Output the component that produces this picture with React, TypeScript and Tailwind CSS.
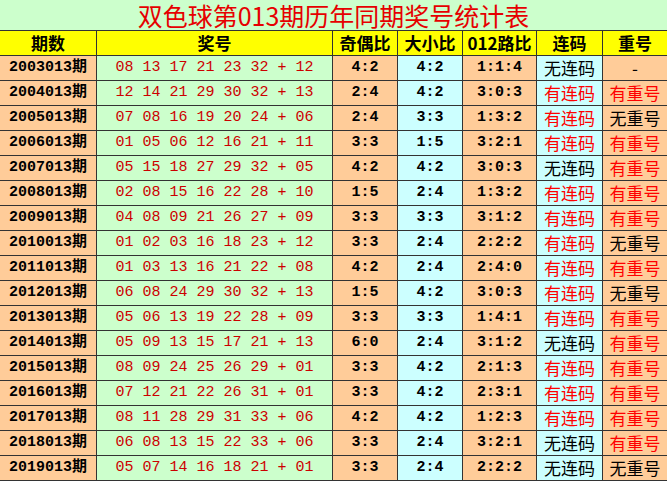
const rows: [string, string, string, string, string, string, string][] = [
  ["2003013期", "08 13 17 21 23 32 + 12", "4:2", "4:2", "1:1:4", "无连码", "-"],
  ["2004013期", "12 14 21 29 30 32 + 13", "2:4", "4:2", "3:0:3", "有连码", "有重号"],
  ["2005013期", "07 08 16 19 20 24 + 06", "2:4", "3:3", "1:3:2", "有连码", "无重号"],
  ["2006013期", "01 05 06 12 16 21 + 11", "3:3", "1:5", "3:2:1", "有连码", "有重号"],
  ["2007013期", "05 15 18 27 29 32 + 05", "4:2", "4:2", "3:0:3", "无连码", "有重号"],
  ["2008013期", "02 08 15 16 22 28 + 10", "1:5", "2:4", "1:3:2", "有连码", "有重号"],
  ["2009013期", "04 08 09 21 26 27 + 09", "3:3", "3:3", "3:1:2", "有连码", "有重号"],
  ["2010013期", "01 02 03 16 18 23 + 12", "3:3", "2:4", "2:2:2", "有连码", "无重号"],
  ["2011013期", "01 03 13 16 21 22 + 08", "4:2", "2:4", "2:4:0", "有连码", "有重号"],
  ["2012013期", "06 08 24 29 30 32 + 13", "1:5", "4:2", "3:0:3", "有连码", "无重号"],
  ["2013013期", "05 06 13 19 22 28 + 09", "3:3", "3:3", "1:4:1", "有连码", "有重号"],
  ["2014013期", "05 09 13 15 17 21 + 13", "6:0", "2:4", "3:1:2", "无连码", "有重号"],
  ["2015013期", "08 09 24 25 26 29 + 01", "3:3", "4:2", "2:1:3", "有连码", "有重号"],
  ["2016013期", "07 12 21 22 26 31 + 01", "3:3", "4:2", "2:3:1", "有连码", "有重号"],
  ["2017013期", "08 11 28 29 31 33 + 06", "4:2", "4:2", "1:2:3", "有连码", "有重号"],
  ["2018013期", "06 08 13 15 22 33 + 06", "3:3", "2:4", "3:2:1", "无连码", "有重号"],
  ["2019013期", "05 07 14 16 18 21 + 01", "3:3", "2:4", "2:2:2", "无连码", "无重号"],
];

const headers = ["期数", "奖号", "奇偶比", "大小比", "012路比", "连码", "重号"];

const mono = "font-['Liberation_Mono','Noto_Sans_CJK_SC',monospace]";
const cjk = "font-['Noto_Sans_CJK_SC',sans-serif]";

export default function App() {
  return (
    <div className="grid w-[667px] grid-cols-[96px_235px_64px_64px_73px_65px_64px] gap-px border-b border-[#333] bg-[#333]">
      <div className={`col-span-7 flex h-[30px] items-center justify-center bg-[#ccffcc] text-[25px] leading-[30px] text-[#e60000] ${cjk}`}>
        双色球第013期历年同期奖号统计表
      </div>

      {headers.map((h) => (
        <div
          key={h}
          className={`flex h-6 items-center justify-center bg-[#ffff00] text-[17px] font-bold leading-6 text-black ${cjk}`}
        >
          {h}
        </div>
      ))}

      {rows.map((r) => (
        <div key={r[0]} className="contents">
          <div className={`flex h-6 items-center justify-center bg-[#ffcc99] text-[15px] font-bold leading-6 text-black ${mono}`}>
            {r[0]}
          </div>
          <div className={`flex h-6 items-center justify-center whitespace-pre bg-[#ccffcc] text-[15px] leading-6 text-[#cc0000] ${mono}`}>
            {r[1]}
          </div>
          <div className={`flex h-6 items-center justify-center bg-[#ffcc99] text-[15px] font-bold leading-6 text-black ${mono}`}>
            {r[2]}
          </div>
          <div className={`flex h-6 items-center justify-center bg-[#ccffff] text-[15px] font-bold leading-6 text-black ${mono}`}>
            {r[3]}
          </div>
          <div className={`flex h-6 items-center justify-center bg-[#ffcc99] text-[15px] font-bold leading-6 text-black ${mono}`}>
            {r[4]}
          </div>
          <div
            className={`flex h-6 items-center justify-center bg-[#ccffff] text-[17px] leading-6 ${cjk} ${
              r[5].startsWith("有") ? "text-[#ff0000]" : "text-black"
            }`}
          >
            {r[5]}
          </div>
          <div
            className={`flex h-6 items-center justify-center bg-[#ffcc99] text-[17px] leading-6 ${cjk} ${
              r[6].startsWith("有") ? "text-[#ff0000]" : "text-black"
            }`}
          >
            {r[6]}
          </div>
        </div>
      ))}
    </div>
  );
}
